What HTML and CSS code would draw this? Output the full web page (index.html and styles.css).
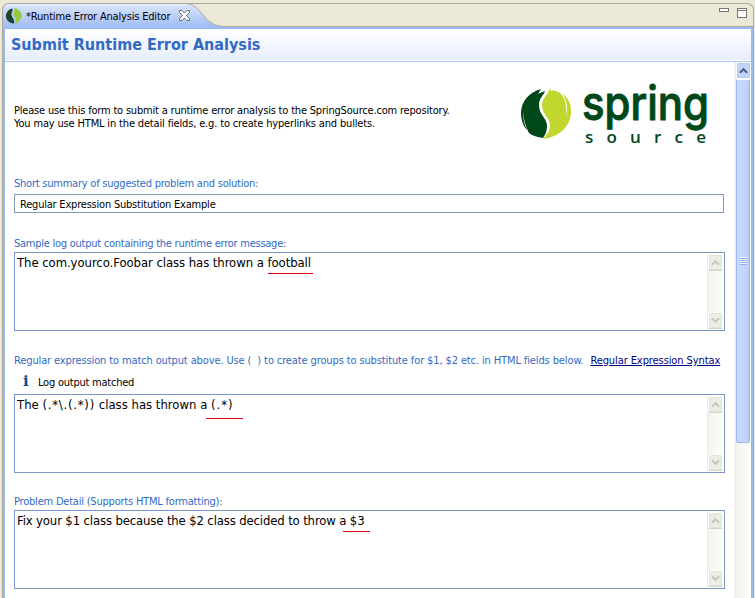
FILE: index.html
```html
<!DOCTYPE html>
<html lang="en">
<head>
<meta charset="utf-8">
<title>Runtime Error Analysis Editor</title>
<link rel="stylesheet" href="styles.css">
</head>
<body>
<svg class="defs" width="0" height="0" aria-hidden="true">
  <linearGradient id="tabfill" x1="0" y1="0" x2="0" y2="1"><stop offset="0" stop-color="#f3f6fd"/><stop offset=".12" stop-color="#d5e1fa"/><stop offset="1" stop-color="#9ab9f4"/></linearGradient>
  <symbol id="up" viewBox="0 0 10 7"><path d="M1 6 5 2 9 6" fill="none" stroke="currentColor" stroke-width="2.3"/></symbol>
  <symbol id="down" viewBox="0 0 10 7"><path d="M1 1 5 5 9 1" fill="none" stroke="currentColor" stroke-width="2.3"/></symbol>
</svg>
<div class="frame">
  <header class="tabbar">
    <svg class="tabshape" width="224" height="26" viewBox="0 0 224 26"><path d="M.5 26V6.500Q1 .5 7 .5H182C202 .5 199 23.500 223 23.500V26Z" fill="url(#tabfill)"/><path d="M.5 26V6.500Q1 .5 7 .5H182C202 .5 199 23.500 223 23.500" fill="none" stroke="#aca899"/></svg>
    <div class="tab">
      <svg width="16" height="16" viewBox="0 0 16 16"><path d="M6.500 .5C3 1 0 4 0 8S3 15 8 15.500C9 11 5 9 5.500 5.500 6 4 7 2.500 6.500 .5Z" fill="#1c4428"/><path d="M8.500 .3C13 1 16 4 15.500 8.300 15 12 12 15 9 15.500 12 10 6.500 8.500 7.300 4.500 8 3 9 2 8.500 .3Z" fill="#94c83d"/></svg>
      <span class="tabtitle">*Runtime Error Analysis Editor</span>
      <svg class="close" width="11" height="11" viewBox="0 0 11 11"><path d="M.5.5H3L5.500 3 8 .5H10.500V2.500L7.500 5.500 10.500 8.500V10.500H8L5.500 8 3 10.500H.5V8.500L3.500 5.500.5 2.500Z" fill="#fff" stroke="#6b6b65"/></svg>
    </div>
    <div class="controls"><i class="min"></i><i class="max"></i></div>
  </header>
  <div class="window">
    <h1><span>Submit Runtime Error Analysis</span></h1>
    <div class="body">
      <main>
        <section class="intro">
          <p><span class="i1">Please use this form to submit a runtime error analysis to the SpringSource.com repository.</span><br><span class="i2">You may use HTML in the detail fields, e.g. to create hyperlinks and bullets.</span></p>
          <svg class="logo" width="190" height="62" viewBox="0 0 190 62">
            <path d="M21 4C9 7 1 17 1 28 1 36 4 42 7 45 4 39 3 33 3 26 4 38 7 44 9 48 13 51 17 52 23 53 26 49 27 45 27 41 27 33 19 30 19 20 19 13 24 10 25 6 23 7 22 7 18 9Z" fill="#00471a"/>
            <path d="M30 3C28 10 22 13 22 20 22 30 30 32 30 41 30 47 26 50 23 54 39 52 50 42 51 28 52 18 46 11 43 9 47 17 48 23 46 32 47 22 45 12 40 8 37 6 34 5 31 6Z" fill="#c2d72e"/>
            <text class="spring" x="62" y="35" textLength="127" lengthAdjust="spacingAndGlyphs">spring</text>
            <text class="source" x="65" y="57.500" textLength="121">source</text>
          </svg>
        </section>
        <label class="l1"><span>Short summary of suggested problem and solution:</span></label>
        <div class="input"><span>Regular Expression Substitution Example</span></div>
        <label class="l2"><span>Sample log output containing the runtime error message:</span></label>
        <div class="area"><p class="t1">The com.yourco.Foobar class has thrown a <span class="mark m1">football</span></p><div class="sb"><b><svg><use href="#up"/></svg></b><b><svg><use href="#down"/></svg></b></div></div>
        <div class="l3"><span class="hint">Regular expression to match output above. Use (&nbsp; ) to create groups to substitute for $1, $2 etc. in HTML fields below.</span><a href="#">Regular Expression Syntax</a></div>
        <div class="status"><i>i</i><span>Log output matched</span></div>
        <div class="area"><p class="t2">The <span class="rx">(.*\.(.*))</span> class has thrown a <span class="mark m2">(.*)</span></p><div class="sb"><b><svg><use href="#up"/></svg></b><b><svg><use href="#down"/></svg></b></div></div>
        <label class="l4"><span>Problem Detail (Supports HTML formatting):</span></label>
        <div class="area"><p class="t3">Fix your $1 class because the $2 class decided to throw a <span class="mark m3">$3</span></p><div class="sb"><b><svg><use href="#up"/></svg></b><b><svg><use href="#down"/></svg></b></div></div>
      </main>
      <aside><b><svg><use href="#up"/></svg></b><div class="thumb"><i></i></div></aside>
    </div>
  </div>
</div>
</body>
</html>
```
FILE: styles.css
```css
*{box-sizing:border-box}
body{margin:0;width:755px;height:598px;overflow:hidden;background:#ece9d8;font:11px/13px "DejaVu Sans Condensed","DejaVu Sans",sans-serif;font-stretch:condensed;color:#000;padding:3px 1px 0 2px}
.defs{position:absolute}
p,h1{margin:0}
span,a,p{white-space:nowrap}
.frame{height:600px;border:1px solid #aca899;border-radius:7px 7px 0 0;border-bottom:0}
.tabbar{height:23px;border-bottom:1px solid #aca899;display:flex;justify-content:space-between;position:relative}
.tabshape{position:absolute;left:-1px;top:-1px}
.tab{position:relative;display:flex;align-items:center;padding:1px 0 0 3px;height:23px}
.tabtitle{margin-left:4px;width:145px;letter-spacing:-.18px}
.close{margin:-2px 0 0 8px}
.controls{display:flex;gap:8px;padding:4px 6px 0 0}
.min{width:10px;height:4px;border:1px solid #76766e;background:#fff}
.max{width:10px;height:10px;border:1px solid #76766e;background:linear-gradient(#fff 1px,#76766e 1px,#76766e 2px,#fff 2px)}
.window{border:2px solid #9ab9f4;border-bottom:0;height:574px;background:#fff}
h1{height:33px;background:linear-gradient(#fff,#e6edfb 31px,#fff 31px,#fff 32px,#a9c3f5 32px);padding:7px 0 0 6px;font:bold 16px/18px "DejaVu Sans Condensed","DejaVu Sans",sans-serif;font-stretch:condensed;color:#316ac5}
.body{display:flex;height:540px}
main{width:729px;padding:18px 0 0 9px}
.intro{display:flex;justify-content:space-between;height:95px;padding-right:24px}
.intro p{padding-top:24px}
.i1{letter-spacing:-.187px}
.i2{letter-spacing:-.16px}
.logo{margin-top:5px;overflow:visible}
.spring{font:500 48px Inter,sans-serif;fill:#00471a;stroke:#00471a;stroke-width:1;stroke-linejoin:round}
.source{font:600 17px "Open Sans",sans-serif;fill:#00471a}
label,.hint{color:#316ac5}
label{display:block;height:13px;letter-spacing:-.23px}
.l1{margin-top:2px}
.input{width:710px;height:19px;margin-top:4px;border:1px solid #7f9db9;padding:3px 0 0 5px;letter-spacing:-.21px}
.l2{margin-top:24px;letter-spacing:-.25px}
.area{width:711px;height:79px;border:1px solid #7a96c4;display:flex;justify-content:space-between;padding:1px}
.l2+.area{margin-top:2px}
.area p{font-size:13px;line-height:17px;padding:0 0 0 1px}
.t1{letter-spacing:-.07px}
.rx{letter-spacing:.75px}
.t3{letter-spacing:-.145px}
.mark{position:relative}
.mark::after{content:"";position:absolute;height:1px;background:#e00010}
.m1::after{left:1px;width:45px;top:18px}
.m2{letter-spacing:.9px}
.m2::after{left:-5px;width:37px;top:21px}
.m3::after{left:-7px;width:27px;top:18px}
.sb{width:16px;border-left:1px solid #eeede5;background:linear-gradient(90deg,#f3f1ec,#fefefb);display:flex;flex-direction:column;justify-content:space-between}
.sb b{width:15px;height:17px;border:1px solid #fff;border-bottom-color:#d6d3c2;border-radius:2px;background:#eeede5;box-shadow:inset 0 0 0 1px #e4e2d7;display:flex;align-items:center;justify-content:center;color:#c9c7ba}
b svg{width:9px;height:7px}
.l3{margin-top:23px;height:14px;display:flex;gap:7px}
.hint{letter-spacing:-.12px}
a{color:#000080;text-decoration:underline;letter-spacing:-.09px}
.status{display:flex;height:26px;padding:8px 0 0 9px;letter-spacing:-.23px}
.status i{width:15px;font:bold 15px/11px "DejaVu Serif",serif;color:#0b4f91}
.l4{margin-top:22px;letter-spacing:-.21px}
.l4+.area{margin-top:2px}
aside{width:17px;border-left:1px solid #eeede5;background:linear-gradient(90deg,#f3f1ec,#fefefb)}
aside b{width:15px;height:17px;margin-left:1px;border:1px solid #fff;border-radius:2px;background:#c3d3fd;box-shadow:inset 0 0 0 1px #b4c8f6;display:flex;align-items:center;justify-content:center;color:#4d6185}
.thumb{width:14px;height:364px;margin-left:1px;border:1px solid #9ab9f4;border-top-color:#fff;border-radius:2px;background:linear-gradient(90deg,#c9d8fc,#c4d4fd 75%,#b4c9f8);display:flex;align-items:center;justify-content:center}
.thumb i{width:7px;height:8px;background:repeating-linear-gradient(#eef4fe 0 1px,#8cb0f8 1px 2px)}
```
